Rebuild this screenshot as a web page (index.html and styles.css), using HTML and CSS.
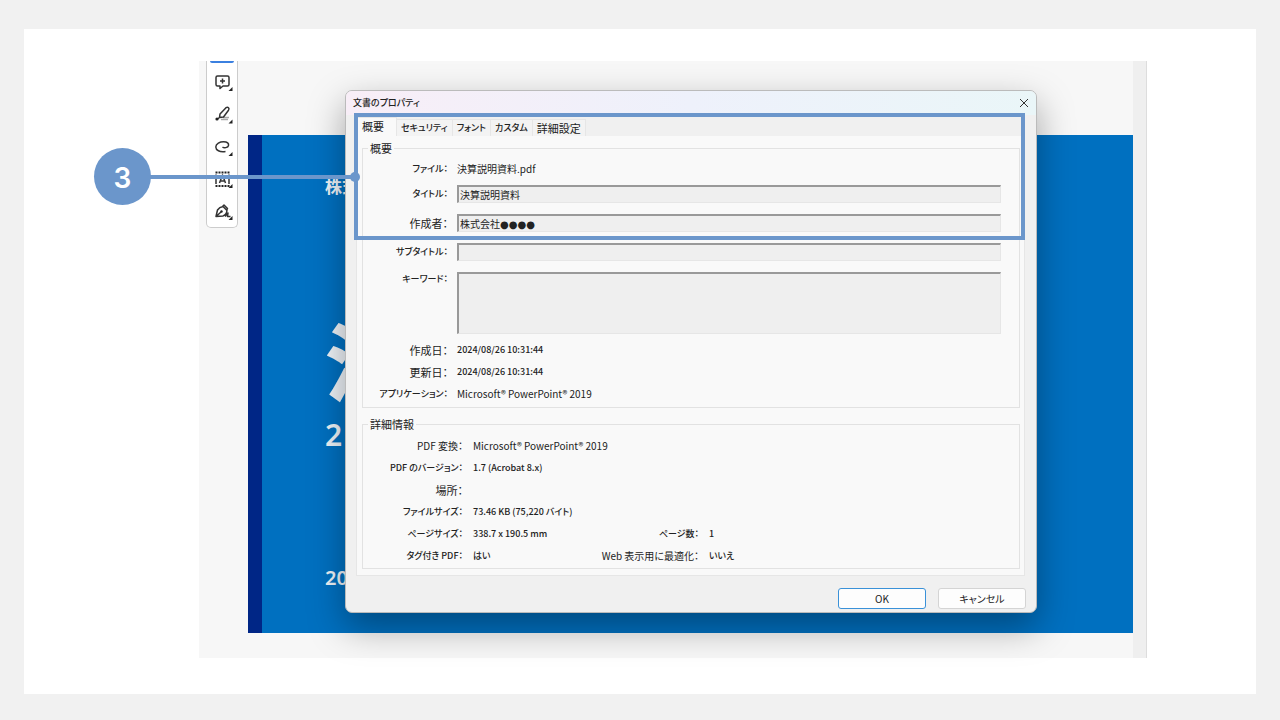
FILE: index.html
```html
<!DOCTYPE html>
<html lang="ja">
<head>
<meta charset="utf-8">
<title>文書のプロパティ</title>
<link rel="stylesheet" href="styles.css">
</head>
<body>
<main class="card">
  <section class="shot">
    <div class="viewer">
      <nav class="tools" aria-label="ツール">
        <button class="tool" aria-label="コメント"><svg viewBox="0 0 32 32"><path class="ln" d="M11.500 9h10a1.500 1.500 0 0 1 1.500 1.500v7a1.500 1.500 0 0 1-1.500 1.500h-4.500l-3 2.500V19h-2.500a1.500 1.500 0 0 1-1.500-1.500v-7A1.500 1.500 0 0 1 11.500 9zM16.500 11.500v5M14 14h5"/><path d="M26.500 20v4h-4z"/></svg></button>
        <button class="tool" aria-label="ハイライト"><svg viewBox="0 0 32 32"><path class="soft" d="M17 18.500h6M15 20.500h7"/><path class="ln" d="M14 15l6-6.300q1.500-1 2.500 0t0 2.500l-5 6.800-4 .5zM13.500 18.500l-2 1.500"/><circle cx="11" cy="20" r="1.600"/><path d="M26.500 20.500v4h-4z"/></svg></button>
        <button class="tool" aria-label="描画"><svg viewBox="0 0 32 32"><path class="ln" d="M19.500 20.500C13.500 21.500 9.800 19 9.800 16 9.800 12.500 14 10.800 17.500 10.800c4 0 5.500 1.700 5 3.900-.5 2.100-4.500 2.600-6 1.300"/><path d="M26.500 21v4h-4z"/></svg></button>
        <button class="tool" aria-label="テキスト"><svg viewBox="0 0 32 32"><path class="ln" d="M10 11.500V21M23 11.500V21M13.500 20l3-8 3 8M14.500 18h4"/><path class="dots" d="M9.500 9.500h14M9.500 23h14"/><path d="M26.500 21v4h-4z"/></svg></button>
        <button class="tool" aria-label="署名"><svg viewBox="0 0 32 32"><path class="ln" d="M10 21.500l1.500-6.500q2-3 5.500-3.500l4 4q-.5 4-4 5.500zM10 21.500l5-4.500M16.500 11.500l1.500-1.500 3.500 3.500-1 2M19 21.500l3-3.500-.5 3.500h3"/><circle cx="15.500" cy="16.500" r="1.200"/><path d="M26.500 21v4h-4z"/></svg></button>
      </nav>
      <article class="slide">
        <p class="company">株式</p>
        <h1 class="headline">決</h1>
        <p class="period">2</p>
        <p class="date">20</p>
      </article>
      <div class="track"></div>
    </div>

    <form class="dialog" role="dialog" aria-labelledby="dlg-title">
      <header class="titlebar">
        <h2 class="title" id="dlg-title">文書のプロパティ</h2>
        <button type="button" class="close" aria-label="閉じる"><svg viewBox="0 0 10 10"><path d="M1 1l8 8M9 1l-8 8"/></svg></button>
      </header>
      <div class="tabs" role="tablist">
        <button type="button" class="tab selected" role="tab">概要</button>
        <button type="button" class="tab small" role="tab">セキュリティ</button>
        <button type="button" class="tab small" role="tab">フォント</button>
        <button type="button" class="tab small" role="tab">カスタム</button>
        <button type="button" class="tab" role="tab">詳細設定</button>
      </div>
      <div class="panel">
        <fieldset class="group summary">
          <legend>概要</legend>
          <div class="row file"><span class="label small">ファイル：</span><span class="medium">決算説明資料.pdf</span></div>
          <div class="row field"><label class="label small" for="f-title">タイトル：</label><input id="f-title" value="決算説明資料" readonly></div>
          <div class="row field"><label class="label" for="f-author">作成者：</label><input id="f-author" class="masked" value="株式会社●●●●" readonly></div>
          <div class="row field"><label class="label small" for="f-sub">サブタイトル：</label><input id="f-sub" readonly></div>
          <div class="row keywords"><label class="label small" for="f-key">キーワード：</label><textarea id="f-key" readonly></textarea></div>
          <div class="row"><span class="label">作成日：</span><span class="small">2024/08/26 10:31:44</span></div>
          <div class="row"><span class="label">更新日：</span><span class="small">2024/08/26 10:31:44</span></div>
          <div class="row"><span class="label small">アプリケーション：</span><span class="medium">Microsoft® PowerPoint® 2019</span></div>
        </fieldset>
        <fieldset class="group details">
          <legend>詳細情報</legend>
          <div class="row"><span class="label medium">PDF 変換：</span><span class="medium">Microsoft® PowerPoint® 2019</span></div>
          <div class="row"><span class="label small">PDF のバージョン：</span><span class="small">1.7 (Acrobat 8.x)</span></div>
          <div class="row"><span class="label">場所：</span></div>
          <div class="row"><span class="label small">ファイルサイズ：</span><span class="small">73.46 KB (75,220 バイト)</span></div>
          <div class="row"><span class="label small">ページサイズ：</span><span class="small">338.7 x 190.5 mm</span><span class="label small">ページ数：</span><span class="small">1</span></div>
          <div class="row"><span class="label small">タグ付き PDF：</span><span class="small">はい</span><span class="label medium">Web 表示用に最適化：</span><span class="small">いいえ</span></div>
        </fieldset>
      </div>
      <footer class="actions">
        <button type="button" class="action primary">OK</button>
        <button type="button" class="action">キャンセル</button>
      </footer>
    </form>

    <div class="frame"></div>
    <div class="leader"></div>
    <div class="badge">3</div>
  </section>
</main>
</body>
</html>
```
FILE: styles.css
```css
* { box-sizing: border-box; }

body {
  margin: 0;
  min-height: 100vh;
  padding: 29px 24px 26px;
  display: flex;
  background: #f1f1f1;
  color: #222;
  font: 11px/14px "Noto Sans CJK JP", sans-serif;
}

h1, h2, p { margin: 0; font-weight: 400; }

button, input, textarea { font: inherit; color: inherit; }

.card {
  flex: 1;
  display: flex;
  padding: 32px 109px 36px 175px;
  background: #fff;
}

.shot {
  position: relative;
  flex: 1;
  display: flex;
}

.viewer {
  flex: 1;
  display: flex;
  align-items: flex-start;
  padding-left: 7px;
  background: #f7f7f7;
  overflow: hidden;
}

.tools {
  display: flex;
  flex-direction: column;
  width: 32px;
  border: 1px solid #ccc;
  border-top: 0;
  border-radius: 0 0 5px 5px;
  background: #fff;
}

.tools::before {
  content: "";
  height: 2px;
  margin: 0 3px 4px;
  border-radius: 0 0 2px 2px;
  background: #3b80e0;
}

.tool {
  display: flex;
  height: 32px;
  padding: 0;
  border: 0;
  background: none;
}

.tool svg {
  width: 32px;
  height: 32px;
  flex: none;
  margin-left: -1px;
  fill: #222;
}

.tool .ln { fill: none; stroke: #333; stroke-width: 1.5; stroke-linejoin: round; }
.tool .soft { fill: none; stroke: #aaa; stroke-width: 1.5; }
.tool .dots { fill: none; stroke: #222; stroke-width: 2; stroke-dasharray: 2 1; }

.slide {
  flex: 1;
  align-self: stretch;
  margin: 74px 0 25px 10px;
  padding: 39px 0 0 63px;
  border-left: 14px solid #002686;
  background: #0070c0;
  color: #eef3f8;
}

.company { font-size: 17px; line-height: 24px; }
.slide .company { font-weight: 700; }
.slide .headline {
  margin-top: 119px;
  font-size: 84px;
  font-weight: 900;
  line-height: 84px;
}
.slide .period {
  margin-top: 16px;
  font: 600 30px/36px "Noto Sans", sans-serif;
}
.slide .date {
  margin-top: 113px;
  font: 600 20px/24px "Noto Sans", sans-serif;
}

.track {
  align-self: stretch;
  width: 14px;
  border-right: 1px solid #ddd;
  background: #efefef;
}

.dialog {
  position: absolute;
  top: 29px;
  left: 146px;
  right: 110px;
  border: 1px solid #bbb;
  border-radius: 7px;
  background: #f0f0f0;
  box-shadow: 0 14px 36px rgba(0, 0, 0, 0.35);
  font-feature-settings: "palt";
}

.titlebar {
  display: flex;
  justify-content: space-between;
  align-items: center;
  height: 24px;
  padding: 0 7px 1px;
  border-radius: 6px 6px 0 0;
  background: linear-gradient(90deg, #f8eef7, #eef1fb 50%, #eaf6f8);
}

.title, .small { font-size: 9px; font-weight: 500; }
.medium { font-size: 10px; }

.close {
  display: flex;
  padding: 0;
  border: 0;
  background: none;
}

.close svg { width: 10px; height: 10px; fill: none; stroke: #333; }

.tabs {
  display: flex;
  align-items: flex-end;
  padding: 2px 10px 0;
}

.tab {
  height: 17px;
  padding: 0 4px;
  border: 1px solid #e6e6e6;
  border-width: 1px 1px 0 0;
  background: #f3f3f3;
  line-height: 14px;
  white-space: nowrap;
}

.tab.selected {
  height: 19px;
  padding: 0 12px 2px 6px;
  background: #f9f9f9;
}

.panel {
  display: flex;
  flex-direction: column;
  gap: 9px;
  margin: 0 11px 0 10px;
  padding: 5px 4px 6px 5px;
  border: 1px solid #e6e6e6;
  border-top: 0;
  background: #f9f9f9;
}

.group {
  min-width: 0;
  margin: 0;
  padding: 3px 18px 2px 0;
  border: 1px solid #e2e2e2;
}

.group legend { margin-left: 5px; padding: 0 2px; }

.row {
  display: grid;
  align-items: center;
  column-gap: 9px;
  min-height: 22px;
  white-space: nowrap;
}

.summary .row { grid-template-columns: 85px 1fr; }

.details { padding: 4px 18px 1px 0; }
.details .row {
  grid-template-columns: 100px 106px 110px 1fr;
  column-gap: 10px;
}

.label { text-align: right; }

.summary .file { margin-bottom: 5px; }
.summary .field { min-height: 18px; margin-bottom: 11px; }
.summary .keywords { align-items: start; margin-bottom: 5px; }

input, textarea {
  display: block;
  width: 100%;
  height: 18px;
  margin: 0;
  padding: 0 1px;
  border: 1px solid #e6e6e6;
  border-top: 2px solid #999;
  border-left: 2px solid #999;
  border-radius: 0;
  outline: 0;
  background: #efefef;
  line-height: 14px;
  resize: none;
}

input { font-size: 10px; }
.masked { font-family: "DejaVu Sans", "Noto Sans CJK JP", sans-serif; }
textarea { height: 62px; }

.actions {
  display: flex;
  justify-content: flex-end;
  gap: 12px;
  padding: 12px 10px 3px;
}

.action {
  width: 88px;
  height: 21px;
  padding: 0;
  border: 1px solid #d4d4d4;
  border-radius: 3px;
  background: #fdfdfd;
  font-size: 10px;
}

.action.primary { border-color: #3a91d8; }

.frame {
  position: absolute;
  top: 52px;
  left: 155px;
  right: 122px;
  height: 127px;
  border: 4px solid #6b96cb;
}

.leader {
  position: absolute;
  top: 114px;
  left: -50px;
  width: 206px;
  height: 4px;
  background: #6b96cb;
}

.leader::after {
  content: "";
  position: absolute;
  top: -3px;
  right: -5px;
  width: 10px;
  height: 10px;
  border-radius: 50%;
  background: #6b96cb;
}

.badge {
  position: absolute;
  top: 87px;
  left: -105px;
  width: 57px;
  height: 57px;
  border-radius: 50%;
  background: #6b96cb;
  color: #fff;
  font: 600 28px/60px Inter, sans-serif;
  text-align: center;
}
```
